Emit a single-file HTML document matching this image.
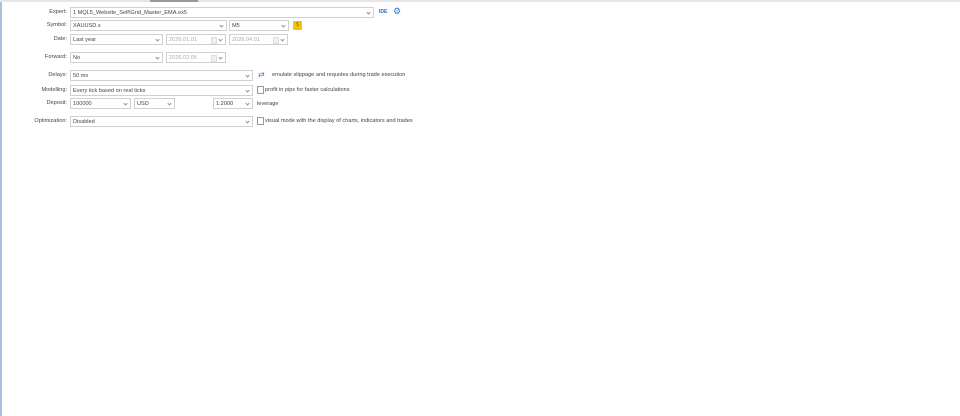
<!DOCTYPE html>
<html><head><style>
body{margin:0;width:960px;height:416px;background:#fff;position:relative;overflow:hidden;font-family:"Liberation Sans",sans-serif;font-size:5.6px;color:#444}
.a{position:absolute}
.l{position:absolute;right:893px;text-align:right;white-space:nowrap}
.f{position:absolute;border:1px solid #d0d0d0;box-sizing:border-box;height:11px;line-height:10px;padding-left:2px;background:#fff;white-space:nowrap}
.f.d{color:#aaa}
.f:after{content:"";position:absolute;right:3px;top:3px;width:2px;height:2px;border-right:1px solid #999;border-bottom:1px solid #999;transform:rotate(45deg)}
.cal:before{content:"";position:absolute;right:8px;top:2px;width:4px;height:5px;border:1px solid #ddd;background:#f0f0f0}
.cb{position:absolute;width:5px;height:6px;border:1px solid #999;background:#fff}
</style></head><body>
<div class="a" style="left:0;top:0;width:2px;height:416px;background:#a9bfdc"></div>
<div class="a" style="left:0;top:0;width:960px;height:2px;background:#e6e6e6"></div>
<div class="a" style="left:150px;top:0;width:48px;height:2px;background:#999"></div>

<div class="l" style="top:9px">Expert:</div>
<div class="f" style="left:70px;top:7px;width:304px">1 MQL5_Website_Self\Grid_Master_EMA.ex5</div>
<div class="a" style="left:379px;top:9px;font-size:5px;color:#2a6cb0;font-weight:bold">IDE</div>
<div class="a" style="left:393px;top:7px;font-size:9px;line-height:9px;color:#2a7bd0">⚙</div>

<div class="l" style="top:22px">Symbol:</div>
<div class="f" style="left:70px;top:20px;width:157px">XAUUSD.s</div>
<div class="f" style="left:229px;top:20px;width:60px">M5</div>
<div class="a" style="left:293px;top:21px;width:9px;height:9px;background:#f4c20d;border-radius:1px;font-size:5px;text-align:center;line-height:9px;color:#a06000">$</div>

<div class="l" style="top:36px">Date:</div>
<div class="f" style="left:70px;top:34px;width:93px">Last year</div>
<div class="f d cal" style="left:166px;top:34px;width:60px">2026.01.01</div>
<div class="f d cal" style="left:229px;top:34px;width:59px">2026.04.01</div>

<div class="l" style="top:54px">Forward:</div>
<div class="f" style="left:70px;top:52px;width:93px">No</div>
<div class="f d cal" style="left:166px;top:52px;width:60px">2026.02.05</div>

<div class="l" style="top:72px">Delays:</div>
<div class="f" style="left:70px;top:70px;width:183px">50 ms</div>
<div class="a" style="left:258px;top:70px;width:10px;height:10px;color:#2a7bd0;font-size:8px;line-height:10px">⇄</div>
<div class="a" style="left:272px;top:72px">emulate slippage and requotes during trade execution</div>

<div class="l" style="top:87px">Modelling:</div>
<div class="f" style="left:70px;top:85px;width:183px">Every tick based on real ticks</div>
<div class="cb" style="left:257px;top:86px"></div>
<div class="a" style="left:265px;top:87px">profit in pips for faster calculations</div>

<div class="l" style="top:100px">Deposit:</div>
<div class="f" style="left:70px;top:98px;width:61px">100000</div>
<div class="f" style="left:134px;top:98px;width:41px">USD</div>
<div class="f" style="left:213px;top:98px;width:40px">1:2000</div>
<div class="a" style="left:257px;top:101px">leverage</div>

<div class="l" style="top:118px">Optimization:</div>
<div class="f" style="left:70px;top:116px;width:183px">Disabled</div>
<div class="cb" style="left:257px;top:117px"></div>
<div class="a" style="left:265px;top:118px">visual mode with the display of charts, indicators and trades</div>
</body></html>
